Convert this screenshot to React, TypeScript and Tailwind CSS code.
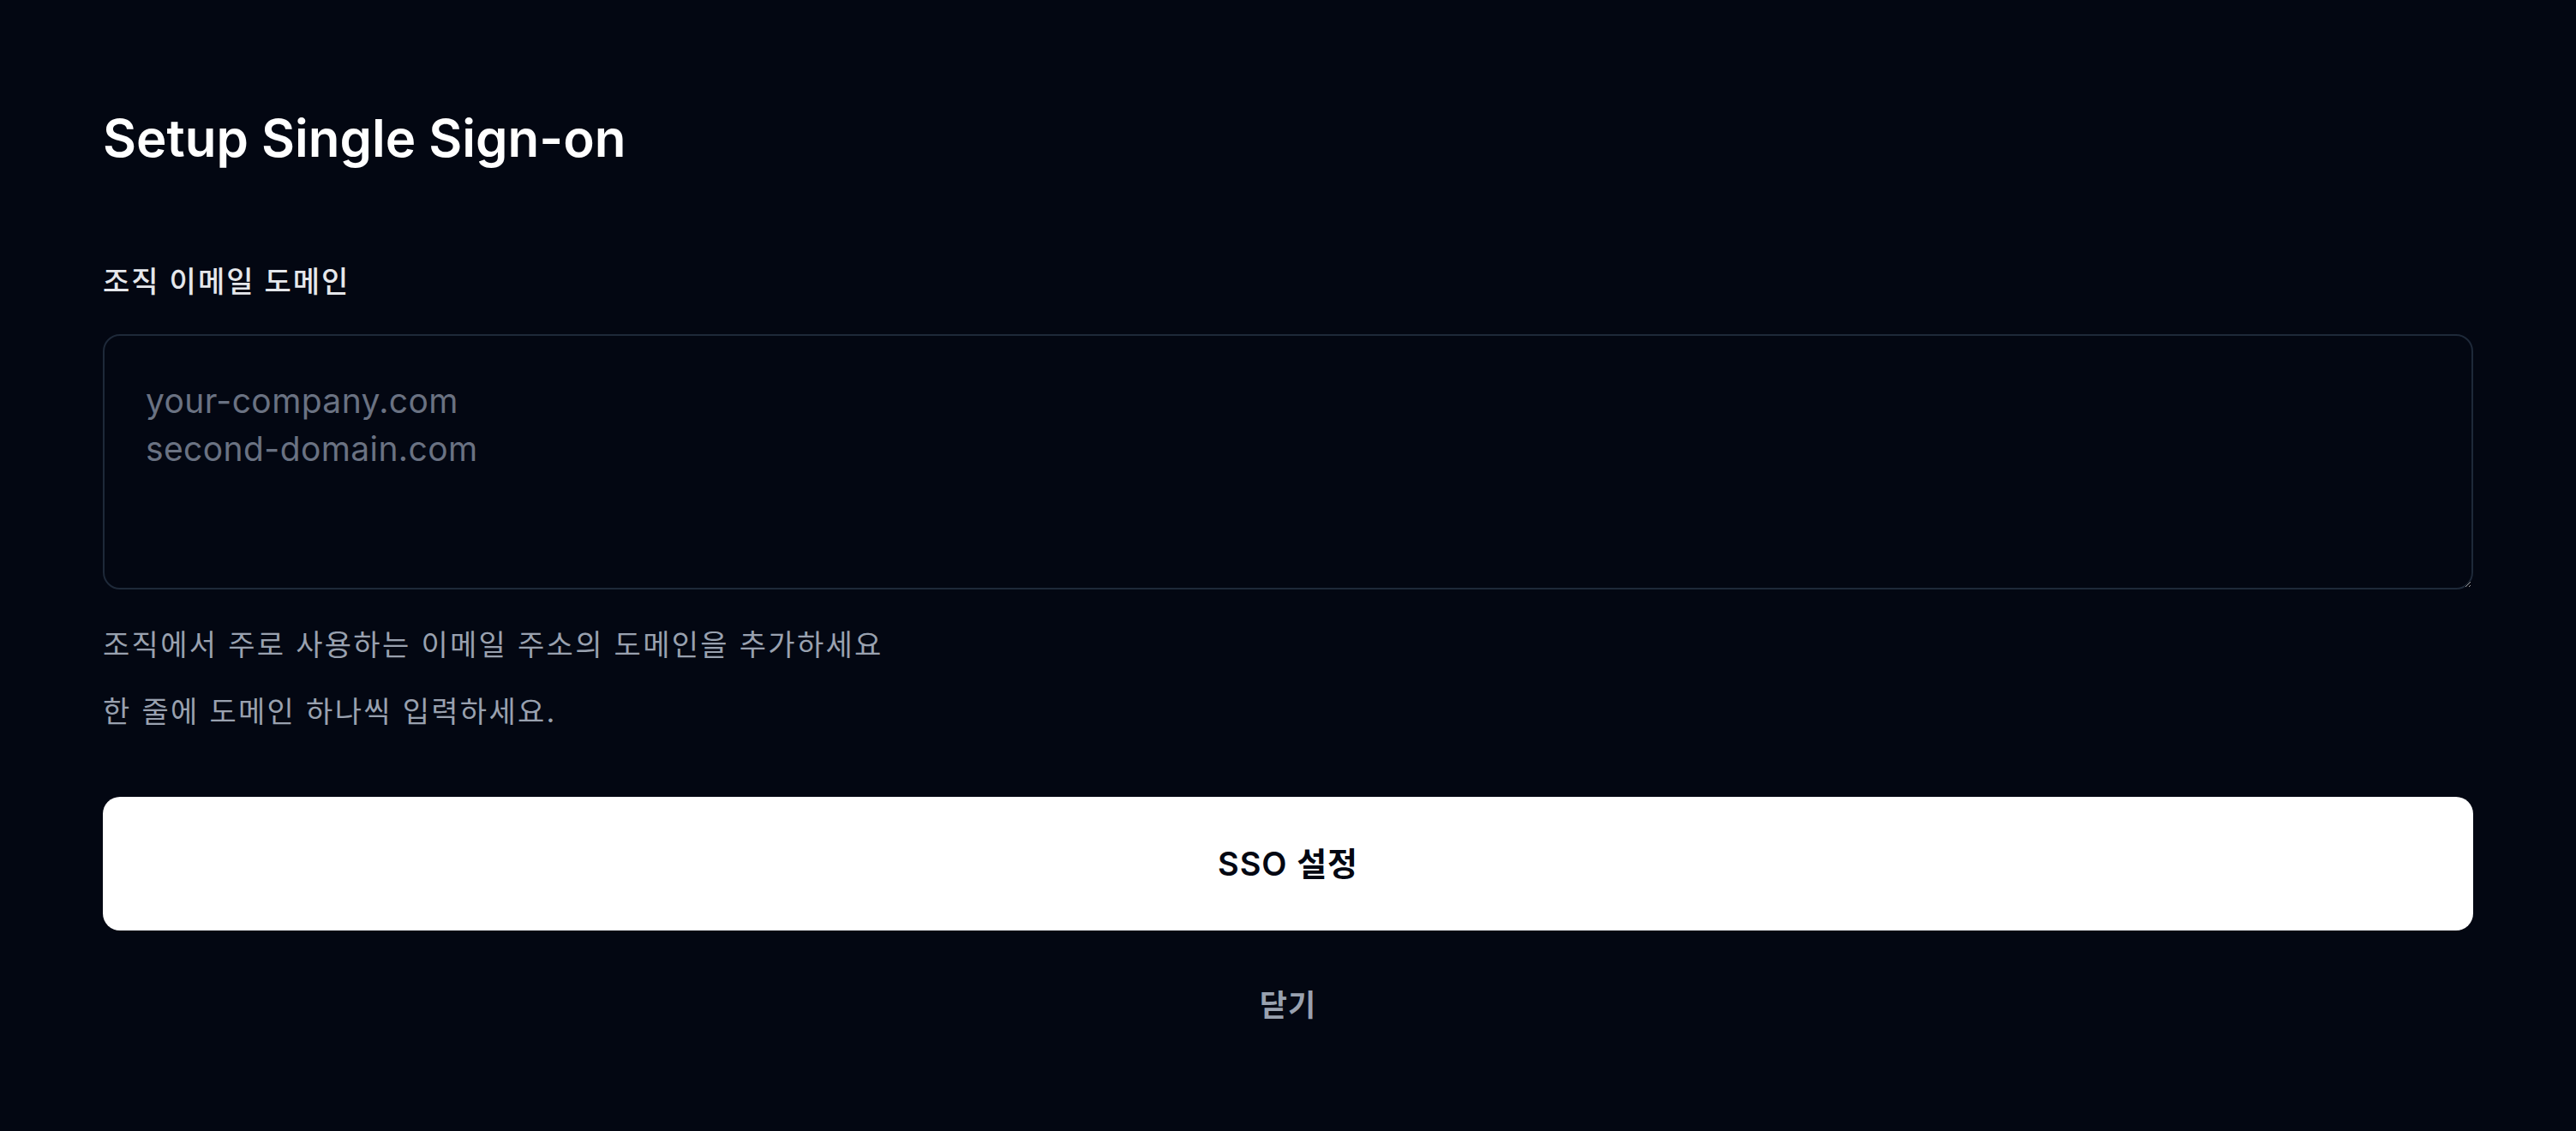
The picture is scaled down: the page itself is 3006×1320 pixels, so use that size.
export default function App() {
  return (
    <div className="min-h-screen bg-[#030712] px-[120px] pt-[125px] font-['Inter','Noto_Sans_CJK_KR',sans-serif]">
      <h1 className="text-[60px] leading-[72px] font-semibold text-white">Setup Single Sign-on</h1>

      <label htmlFor="domains" className="mt-[108px] block text-[34px] leading-[48px] font-medium tracking-[2px] text-gray-200">
        조직 이메일 도메인
      </label>

      <textarea
        id="domains"
        placeholder={'your-company.com\nsecond-domain.com'}
        className="mt-[37px] block h-[298px] w-full rounded-[20px] border-2 border-gray-800 bg-transparent px-[48px] py-[48px] text-[39px] leading-[56px] tracking-[0.4px] text-white placeholder:text-gray-500 outline-none"
      />

      <div className="mt-[41px] flex flex-col gap-[30px] text-[34px] leading-[48px] tracking-[2.3px] text-gray-400">
        <p>조직에서 주로 사용하는 이메일 주소의 도메인을 추가하세요</p>
        <p>한 줄에 도메인 하나씩 입력하세요.</p>
      </div>

      <button className="mt-[75px] flex h-[156px] w-full items-center justify-center rounded-[20px] bg-white text-[38px] font-semibold tracking-[1px] text-gray-950">
        SSO 설정
      </button>

      <div className="mt-[63px] flex justify-center">
        <button className="text-[35px] leading-[48px] font-semibold tracking-[1px] text-gray-400">닫기</button>
      </div>
    </div>
  );
}
